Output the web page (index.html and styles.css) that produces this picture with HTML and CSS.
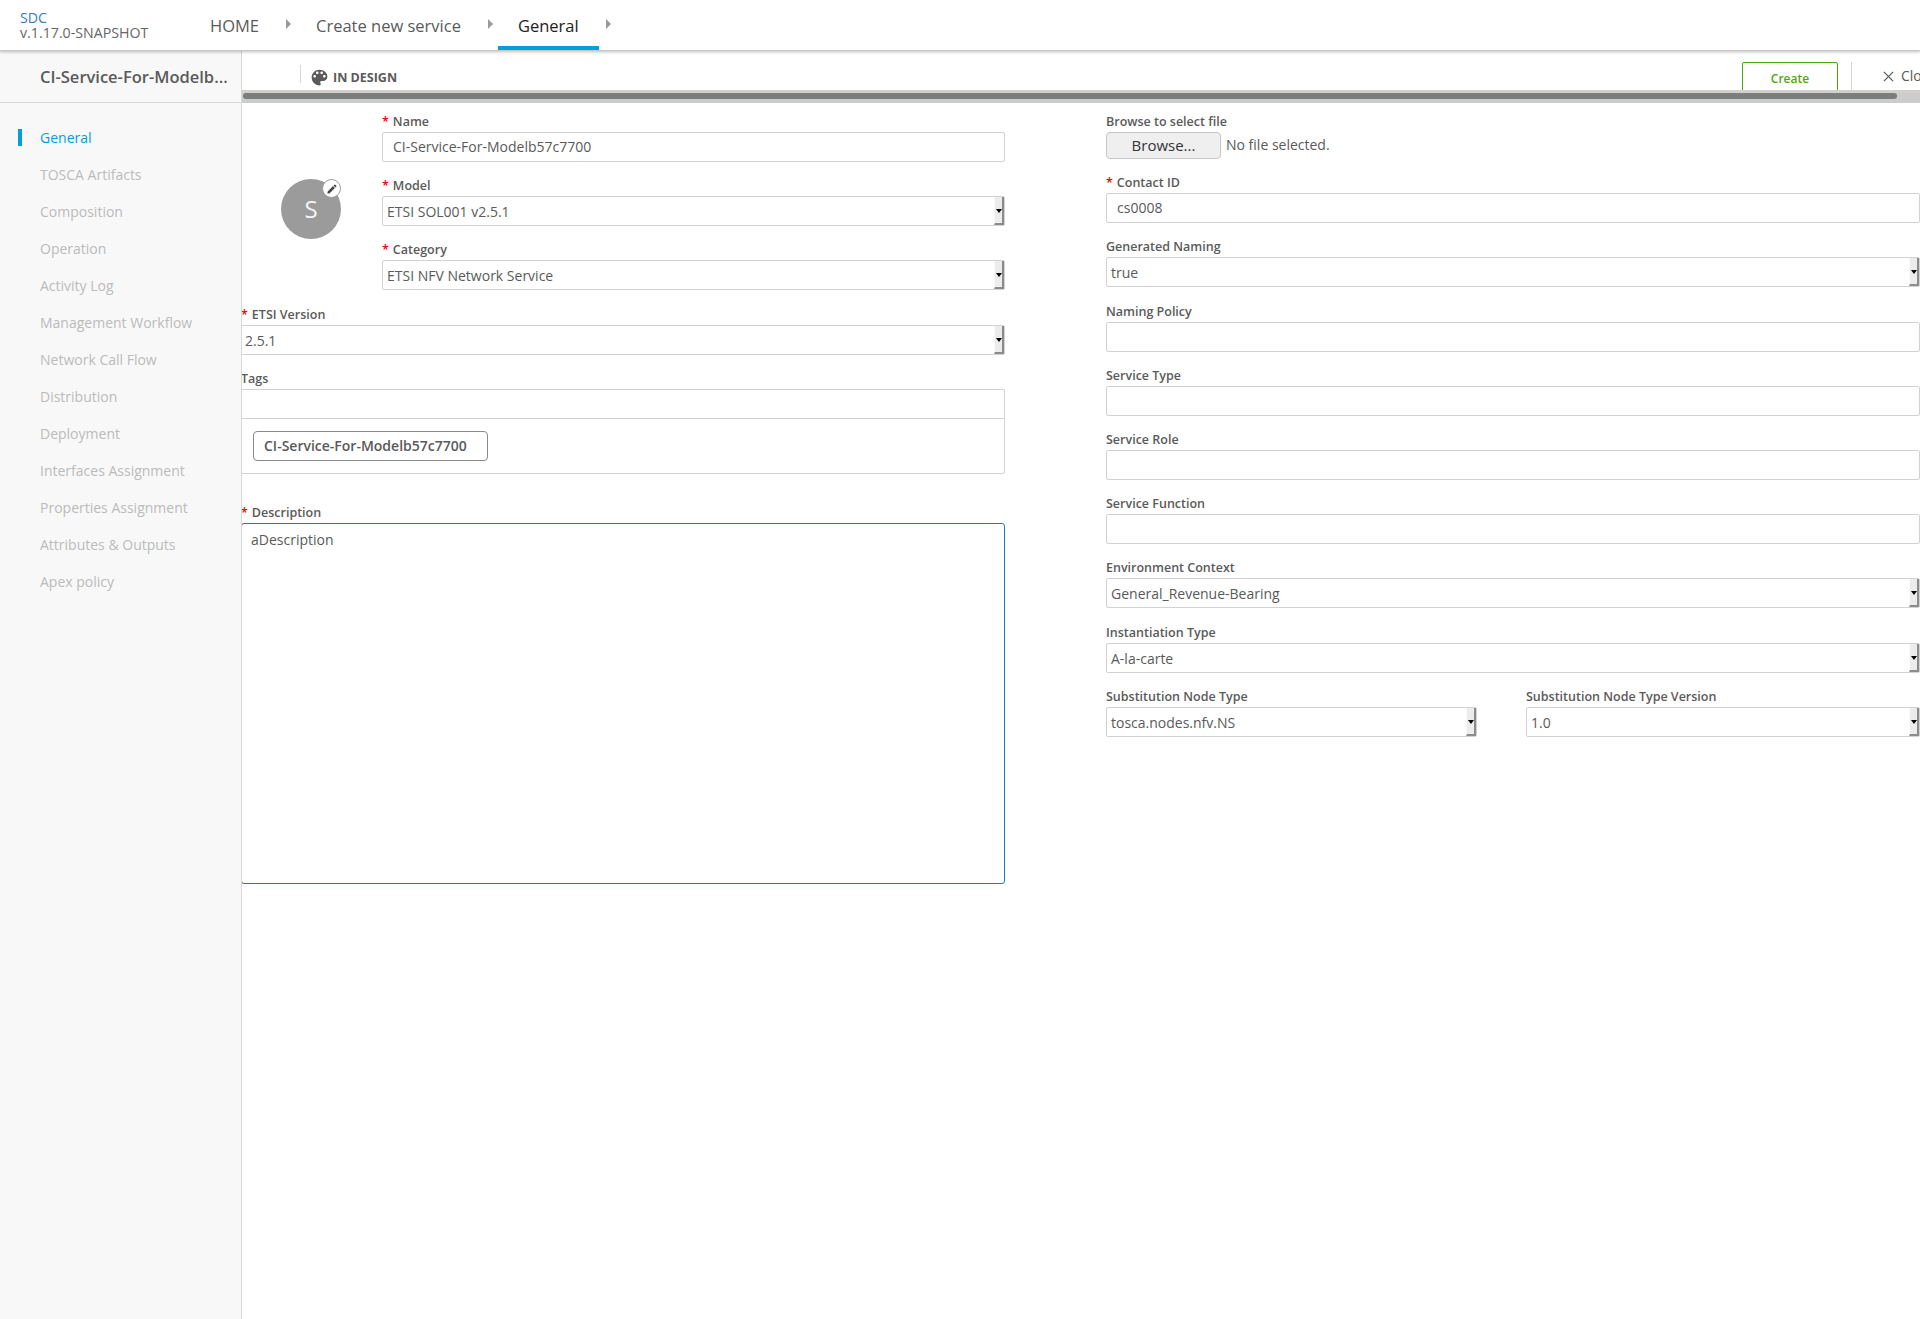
FILE: index.html
```html
<!DOCTYPE html>
<html lang="en">
<head>
    <meta charset="UTF-8">
    <title>SDC - General</title>
    <link rel="stylesheet" href="styles.css">
</head>
<body>
<header class="topNav">
    <div class="brand">
        <div class="brandName">SDC</div>
        <div class="brandVersion">v.1.17.0-SNAPSHOT</div>
    </div>
    <nav class="crumbs">
        <a class="crumb">HOME</a><span class="crumbArrow"></span>
        <a class="crumb">Create new service</a><span class="crumbArrow"></span>
        <a class="crumb active">General</a><span class="crumbArrow"></span>
    </nav>
</header>

<div class="page">
    <aside class="sidebar">
        <div class="sideTitle">CI-Service-For-Modelb...</div>
        <ul class="sideMenu">
            <li class="selected">General</li>
            <li>TOSCA Artifacts</li>
            <li>Composition</li>
            <li>Operation</li>
            <li>Activity Log</li>
            <li>Management Workflow</li>
            <li>Network Call Flow</li>
            <li>Distribution</li>
            <li>Deployment</li>
            <li>Interfaces Assignment</li>
            <li>Properties Assignment</li>
            <li>Attributes &amp; Outputs</li>
            <li>Apex policy</li>
        </ul>
    </aside>

    <main class="content">
        <div class="actionBar">
            <div class="status">
                <svg class="statusIcon" viewBox="0 0 24 24"><path d="M12 3c-4.97 0-9 4.03-9 9s4.03 9 9 9c.83 0 1.5-.67 1.5-1.5 0-.39-.15-.74-.39-1.01-.23-.26-.38-.61-.38-.99 0-.83.67-1.5 1.5-1.5H16c2.76 0 5-2.24 5-5 0-4.42-4.03-8-9-8zm-5.5 9c-.83 0-1.5-.67-1.5-1.5S5.67 9 6.5 9 8 9.67 8 10.5 7.33 12 6.5 12zm3-4C8.67 8 8 7.33 8 6.5S8.67 5 9.5 5s1.5.67 1.5 1.5S10.33 8 9.5 8zm5 0c-.83 0-1.5-.67-1.5-1.5S13.67 5 14.5 5s1.5.67 1.5 1.5S15.33 8 14.5 8zm3 4c-.83 0-1.5-.67-1.5-1.5S16.67 9 17.5 9s1.5.67 1.5 1.5-.67 1.5-1.5 1.5z"/></svg>
                <span>IN DESIGN</span>
            </div>
            <button class="createBtn">Create</button>
            <div class="closeBtn">
                <svg class="closeIcon" viewBox="0 0 12 12"><path d="M1 1l10 10M11 1L1 11"/></svg>
                <span>Close</span>
            </div>
        </div>
        <div class="scrollTrack"><div class="scrollThumb"></div></div>

        <form class="formGrid">
            <div class="leftCol">
                <div class="topFields">
                    <div class="iconSide">
                        <div class="avatar">S
                            <span class="editBadge">
                                <svg viewBox="0 0 24 24"><path d="M3 17.25V21h3.75L17.81 9.94l-3.75-3.75L3 17.25zM20.71 7.04c.39-.39.39-1.02 0-1.41l-2.34-2.34c-.39-.39-1.02-.39-1.41 0l-1.83 1.83 3.75 3.75 1.83-1.83z"/></svg>
                            </span>
                        </div>
                    </div>
                    <div class="fieldStack">
                        <div class="field">
                            <label><b>*</b>Name</label>
                            <input class="box" type="text" value="CI-Service-For-Modelb57c7700">
                        </div>
                        <div class="field">
                            <label><b>*</b>Model</label>
                            <div class="box select"><span>ETSI SOL001 v2.5.1</span><i class="selectBtn"></i></div>
                        </div>
                        <div class="field">
                            <label><b>*</b>Category</label>
                            <div class="box select"><span>ETSI NFV Network Service</span><i class="selectBtn"></i></div>
                        </div>
                    </div>
                </div>

                <div class="edgeFields">
                    <div class="field etsiField">
                        <label><b>*</b>ETSI Version</label>
                        <div class="box select flush"><span>2.5.1</span><i class="selectBtn"></i></div>
                    </div>
                    <div class="field tagsField">
                        <label>Tags</label>
                        <input class="box tagInput" type="text">
                        <div class="tagList"><span class="tag">CI-Service-For-Modelb57c7700</span></div>
                    </div>
                    <div class="field">
                        <label><b>*</b>Description</label>
                        <textarea class="descBox">aDescription</textarea>
                    </div>
                </div>
            </div>

            <div class="rightCol">
                <div class="field">
                    <label>Browse to select file</label>
                    <div class="fileRow">
                        <button type="button" class="browseBtn">Browse...</button>
                        <span class="fileName">No file selected.</span>
                    </div>
                </div>
                <div class="field">
                    <label><b>*</b>Contact ID</label>
                    <input class="box" type="text" value="cs0008">
                </div>
                <div class="field">
                    <label>Generated Naming</label>
                    <div class="box select"><span>true</span><i class="selectBtn"></i></div>
                </div>
                <div class="field">
                    <label>Naming Policy</label>
                    <input class="box" type="text">
                </div>
                <div class="field">
                    <label>Service Type</label>
                    <input class="box" type="text">
                </div>
                <div class="field">
                    <label>Service Role</label>
                    <input class="box" type="text">
                </div>
                <div class="field">
                    <label>Service Function</label>
                    <input class="box" type="text">
                </div>
                <div class="field">
                    <label>Environment Context</label>
                    <div class="box select"><span>General_Revenue-Bearing</span><i class="selectBtn"></i></div>
                </div>
                <div class="field">
                    <label>Instantiation Type</label>
                    <div class="box select"><span>A-la-carte</span><i class="selectBtn"></i></div>
                </div>
                <div class="subRow">
                    <div class="field">
                        <label>Substitution Node Type</label>
                        <div class="box select"><span>tosca.nodes.nfv.NS</span><i class="selectBtn"></i></div>
                    </div>
                    <div class="field">
                        <label>Substitution Node Type Version</label>
                        <div class="box select"><span>1.0</span><i class="selectBtn"></i></div>
                    </div>
                </div>
            </div>
        </form>
    </main>
</div>
</body>
</html>
```

FILE: styles.css
```css
*{
    margin: 0;
    padding: 0;
    box-sizing: border-box;
}
html, body{
    height: 100%;
    overflow: hidden;
}
body{
    background-color: #fff;
    color: #5a5a5a;
    font-family: "Open Sans", sans-serif;
    font-size: 14px;
}

/* top navigation */
.topNav{
    position: relative;
    z-index: 2;
    height: 51px;
    display: flex;
    background-color: #fff;
    border-bottom: 1px solid #c8c8c8;
    box-shadow: 0 1px 3px rgba(0,0,0,0.25);
}
.brand{
    width: 190px;
    padding: 10px 0 0 20px;
    font-size: 14.2px;
    line-height: 15px;
}
.brandName{
    color: #3a7cb8;
}
.brandVersion{
    color: #666;
}
.crumbs{
    display: flex;
}
.crumb{
    height: 50px;
    padding: 0 20px;
    font-size: 16.5px;
    line-height: 51px;
    color: #5a5a5a;
}
.crumb.active{
    color: #222;
    font-weight: 500;
    border-bottom: 4px solid #009fdb;
}
.crumbArrow{
    width: 0;
    height: 0;
    margin: 19px 5px 0 7px;
    border-left: 5px solid #9a9a9a;
    border-top: 5px solid transparent;
    border-bottom: 5px solid transparent;
}

.page{
    display: flex;
    height: calc(100% - 51px);
}

/* sidebar */
.sidebar{
    position: relative;
    z-index: 1;
    width: 242px;
    flex-shrink: 0;
    background-color: #f8f8f8;
    border-right: 1px solid #d8d8d8;
}
.sideTitle{
    height: 52px;
    padding-left: 40px;
    font-size: 16.5px;
    font-weight: 600;
    line-height: 52px;
    color: #5a5a5a;
    border-bottom: 1px solid #d8d8d8;
}
.sideMenu{
    list-style: none;
    padding-top: 16px;
}
.sideMenu li{
    position: relative;
    height: 37px;
    padding-left: 40px;
    line-height: 37px;
    color: #bbb;
}
.sideMenu li.selected{
    color: #009fdb;
}
.sideMenu li.selected::before{
    content: "";
    position: absolute;
    left: 18px;
    top: 10px;
    width: 4px;
    height: 17px;
    background-color: #009fdb;
}

/* main area */
.content{
    flex: 1;
    min-width: 0;
    overflow: hidden;
}
.actionBar{
    height: 39px;
    display: flex;
    overflow: hidden;
    padding-top: 11px;
}
.status{
    display: flex;
    align-items: flex-start;
    height: 18px;
    margin: 3px 0 0 58px;
    padding-left: 8px;
    border-left: 1px solid #d8d8d8;
    font-size: 12.5px;
    font-weight: 700;
    color: #5a5a5a;
}
.status span{
    margin-top: 4px;
    line-height: 17px;
}
.statusIcon{
    flex-shrink: 0;
    width: 21px;
    height: 21px;
    margin: 2px 3px 0 0;
    fill: #5a5a5a;
}
.createBtn{
    width: 96px;
    height: 34px;
    margin-left: auto;
    background-color: #fff;
    border: 1px solid #4ca90c;
    border-radius: 2px;
    color: #4ca90c;
    font-family: inherit;
    font-size: 12px;
    font-weight: 600;
    padding-bottom: 2px;
}
.closeBtn{
    width: 69px;
    flex-shrink: 0;
    height: 34px;
    margin-left: 13px;
    padding-left: 31px;
    display: flex;
    gap: 7px;
    border-left: 1px solid #d8d8d8;
    white-space: nowrap;
    font-size: 14px;
    line-height: 28px;
}
.closeIcon{
    width: 11px;
    height: 11px;
    margin-top: 9px;
    flex-shrink: 0;
    stroke: #5a5a5a;
    stroke-width: 1.4;
    fill: none;
}
.scrollTrack{
    height: 13px;
    background-color: #ccc;
    border-top: 3px solid #d3cfca;
}
.scrollThumb{
    width: 1654px;
    height: 6px;
    margin-left: 1px;
    background-color: #7b7e7f;
    border-radius: 3px;
}

/* form */
.formGrid{
    display: flex;
    gap: 101px;
    padding-top: 10px;
}
.leftCol{
    width: 763px;
    flex-shrink: 0;
}
.rightCol{
    width: 814px;
    flex-shrink: 0;
}
.field{
    margin-bottom: 15px;
}
.rightCol .field{
    margin-bottom: 15.2px;
}
.field label{
    display: block;
    height: 19px;
    font-size: 12.5px;
    font-weight: 600;
    line-height: 17px;
    color: #5a5a5a;
}
.field label b{
    color: #f00;
    margin-right: 4px;
    font-weight: 600;
}
.box{
    display: block;
    width: 100%;
    height: 30px;
    background-color: #fff;
    border: 1px solid #d2d2d2;
    border-radius: 2px;
    padding: 0 10px 1px;
    font-family: inherit;
    font-size: 14px;
    color: #5a5a5a;
}
.select{
    display: flex;
    justify-content: space-between;
    align-items: flex-start;
    padding: 0 0 0 4px;
    line-height: 30px;
}
.select.flush{
    padding-left: 3px;
}
.selectBtn{
    position: relative;
    width: 10px;
    height: 28px;
    background-color: #ececec;
    border-right: 2px solid #8c8c8c;
    border-bottom: 2px solid #8c8c8c;
    border-left: 1px solid #fafafa;
}
.selectBtn::after{
    content: "";
    position: absolute;
    left: 1px;
    top: 12px;
    border-top: 4px solid #000;
    border-left: 3px solid transparent;
    border-right: 3px solid transparent;
}

/* icon next to the name */
.topFields{
    display: flex;
}
.iconSide{
    width: 140px;
    flex-shrink: 0;
    padding: 66px 0 0 39px;
}
.avatar{
    position: relative;
    width: 60px;
    height: 60px;
    background-color: #9b9b9b;
    border-radius: 50%;
    color: #f4f4f4;
    font-size: 24px;
    line-height: 60px;
    text-align: center;
}
.editBadge{
    position: absolute;
    right: 0;
    top: 0;
    width: 19px;
    height: 19px;
    display: flex;
    align-items: center;
    justify-content: center;
    background-color: #fff;
    border: 1px solid #9b9b9b;
    border-radius: 50%;
}
.editBadge svg{
    width: 12px;
    height: 12px;
    fill: #444;
}
.fieldStack{
    flex: 1;
}

/* these run from under the sidebar line */
.edgeFields{
    margin-left: -1px;
}
.etsiField{
    padding-top: 1px;
}
.tagsField{
    margin-bottom: 30px;
}
.tagInput{
    height: 29px;
    border-bottom: none;
    border-radius: 2px 2px 0 0;
}
.tagList{
    height: 56px;
    padding: 12px 11px;
    background-color: #fff;
    border: 1px solid #d2d2d2;
    border-radius: 0 0 2px 2px;
}
.tag{
    display: inline-block;
    width: 235px;
    height: 30px;
    padding-left: 10px;
    border: 1px solid #8a8a8a;
    border-radius: 4px;
    font-weight: 600;
    line-height: 28px;
    color: #5a5a5a;
}
.descBox{
    display: block;
    width: 100%;
    height: 361px;
    padding: 6px 9px;
    border: 1px solid #2a72cc;
    border-radius: 3px;
    outline: none;
    resize: none;
    font-family: inherit;
    font-size: 14px;
    line-height: 19px;
    color: #5a5a5a;
}

/* right column */
.fileRow{
    display: flex;
    align-items: center;
    gap: 5px;
    height: 27px;
}
.fileName{
    margin-bottom: 2px;
}
.browseBtn{
    width: 115px;
    height: 27px;
    padding-bottom: 2px;
    background-color: #efefef;
    border: 1px solid #c6c6c6;
    border-radius: 4px;
    font-family: inherit;
    font-size: 15px;
    color: #333;
}
.subRow{
    display: flex;
    gap: 49px;
}
.subRow .field:first-child{
    width: 371px;
}
.subRow .field:last-child{
    width: 394px;
}
```
